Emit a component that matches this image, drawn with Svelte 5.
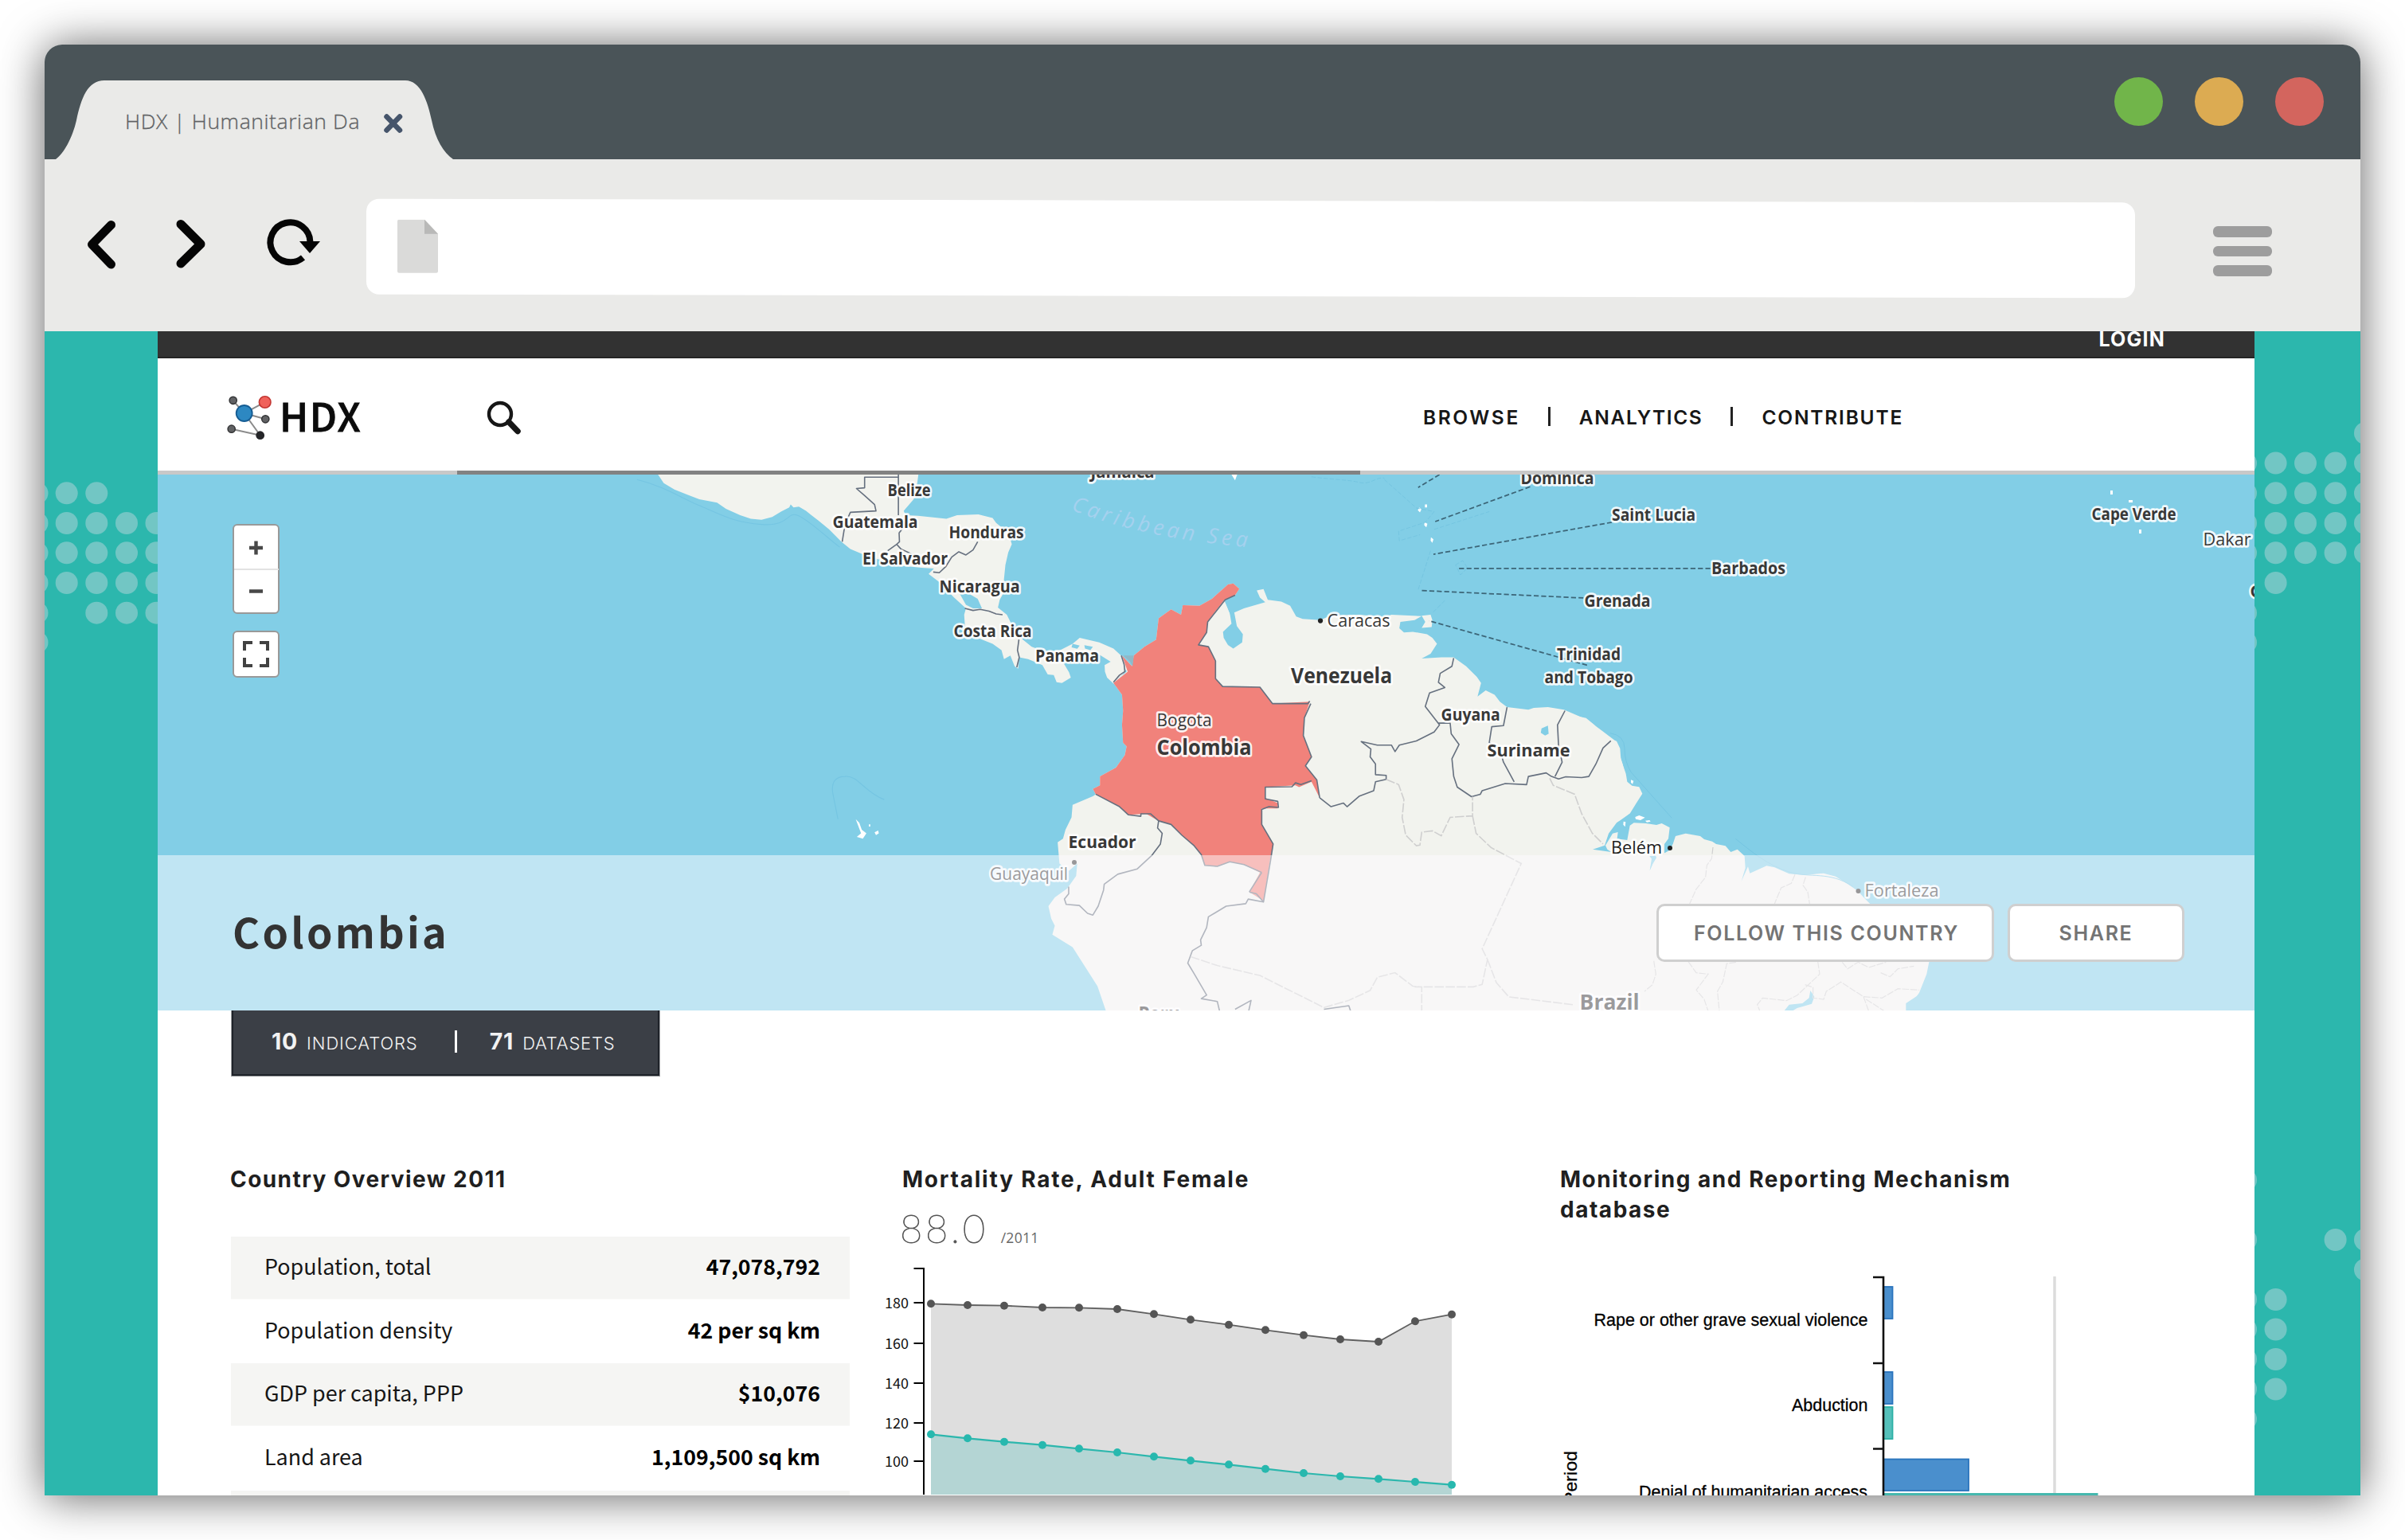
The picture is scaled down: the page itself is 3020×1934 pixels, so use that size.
<script>
  const leftDots = [
    [46.5, 619.3], [83.7, 619.3], [121.3, 619.3],
    [46.5, 657], [83.7, 657], [121.3, 657], [159, 657], [196.5, 657],
    [46.5, 694.3], [83.7, 694.3], [121.3, 694.3], [159, 694.3], [196.5, 694.3],
    [46.5, 732], [83.7, 732], [121.3, 732], [159, 732], [196.5, 732],
    [46.5, 769.7], [121.3, 769.7], [159, 769.7], [196.5, 769.7],
    [46.5, 806.7]
  ];
  const rightDots = [
    [2970, 544],
    [2820, 581.6], [2857.6, 581.6], [2895, 581.6], [2932.6, 581.6], [2970, 581.6],
    [2820, 619.3], [2857.6, 619.3], [2895, 619.3], [2932.6, 619.3], [2970, 619.3],
    [2820, 657], [2857.6, 657], [2895, 657], [2932.6, 657], [2970, 657],
    [2820, 694.3], [2857.6, 694.3], [2895, 694.3], [2932.6, 694.3], [2970, 694.3],
    [2857.6, 732], [2820, 769.7], [2820, 806.7],
    [2820, 1482], [2820, 1557], [2932.6, 1557], [2970, 1557], [2970, 1594.5],
    [2820, 1632], [2857.6, 1632], [2820, 1669.5], [2857.6, 1669.5],
    [2820, 1707], [2857.6, 1707], [2820, 1744.5], [2857.6, 1744.5], [2820, 1782]
  ];
  const dots = [...leftDots, ...rightDots];

  // [text, x, baseline, width, style]
  const labels = [
    ['Belize', 1115, 623, 54, 'country'],
    ['Guatemala', 1046, 663, 107, 'country'],
    ['Honduras', 1192, 676, 94, 'country'],
    ['El Salvador', 1083.5, 708.5, 107, 'country'],
    ['Nicaragua', 1180, 743.5, 101, 'country'],
    ['Costa Rica', 1198, 799.5, 98, 'country'],
    ['Panama', 1300.5, 830.5, 80, 'country'],
    ['Ecuador', 1342, 1065, 85, 'country mid'],
    ['Jamaica', 1370, 600, 80, 'country'],
    ['Guayaquil', 1243.5, 1105, 98, 'city'],
    ['Caracas', 1667, 787, 79, 'city'],
    ['Bogota', 1453, 912, 69, 'city'],
    ['Colombia', 1453, 947.5, 119, 'country big'],
    ['Venezuela', 1621.5, 858, 127, 'country big'],
    ['Guyana', 1810, 904.5, 74, 'country'],
    ['Suriname', 1868, 950, 104, 'country mid'],
    ['Dominica', 1910, 608, 92, 'country'],
    ['Trinidad', 1955.5, 829, 80, 'country'],
    ['and Tobago', 1940, 857.5, 111, 'country'],
    ['Saint Lucia', 2024.5, 654, 105, 'country'],
    ['Barbados', 2149.5, 721, 93, 'country'],
    ['Grenada', 1990, 762, 83, 'country'],
    ['Cape Verde', 2627, 653, 106, 'country'],
    ['Dakar', 2767, 685, 60, 'city'],
    ['G', 2826, 750, 15, 'country'],
    ['Belém', 2023.5, 1072, 64, 'city dark'],
    ['Fortaleza', 2342, 1126, 93, 'city'],
    ['Brazil', 1984, 1267.5, 75, 'country big'],
    ['Peru', 1430, 1283, 52, 'country big']
  ];

  const facts = [
    ['Population, total', '47,078,792'],
    ['Population density', '42 per sq km'],
    ['GDP per capita, PPP', '$10,076'],
    ['Land area', '1,109,500 sq km'],
    ['', '']
  ];

  const xs = [1169, 1215, 1261, 1309, 1355, 1403, 1449, 1495, 1543, 1589, 1637, 1683, 1731, 1777, 1823];
  const grey = [1638.3, 1640, 1640.7, 1643, 1643.3, 1645, 1651.3, 1658.3, 1664.7, 1671.3, 1677.7, 1683, 1686, 1660.3, 1651.7];
  const teal = [1802.3, 1807.3, 1811.7, 1815.7, 1820.3, 1825, 1830.3, 1835.3, 1840.3, 1845.7, 1851, 1855, 1858.3, 1862, 1865.7];
  const line = (ys) => xs.map((x, i) => `${x},${ys[i]}`).join(' ');
  const area = (ys) => `${xs[0]},1890 ${line(ys)} ${xs[xs.length - 1]},1890`;
  const yTicks = [[180, 1637], [160, 1688], [140, 1738], [120, 1788], [100, 1836]];
</script>

<div class="window">
  <div class="titlebar">
    <div class="tab">
      <svg class="tabshape" width="513" height="99" viewBox="0 0 513 99">
        <path d="M10,99C20,92 31,72 36,50C42,22 50,0 71,0L449,0C468,0 477,26 482,50C487,74 497,91 509,99Z" fill="#eaeae8" />
      </svg>
      <span class="tabtitle">HDX | Humanitarian Da</span>
      <svg class="tabclose" width="26" height="26" viewBox="0 0 26 26">
        <path d="M4.500 4.500L21 21.500M21 4.500L4.500 21.500" stroke="#46556b" stroke-width="6.500" stroke-linecap="round" />
      </svg>
    </div>
    <div class="lights"><i class="green"></i><i class="amber"></i><i class="red"></i></div>
  </div>

  <div class="toolbar">
    <svg class="navicons" width="350" height="80" viewBox="100 266 350 80">
      <g fill="none" stroke="#050505" stroke-linecap="round" stroke-linejoin="round" stroke-width="11">
        <path d="M139.500 282.500L115.500 307L139.500 332" />
        <path d="M227 281.500L252 306.500L227 331" />
      </g>
      <path d="M380.500,323.500 A25,25 0 1 1 389.500,304" fill="none" stroke="#050505" stroke-width="8" />
      <path d="M376 303H402L389 318Z" fill="#050505" />
    </svg>
    <div class="address">
      <svg width="52" height="68" viewBox="0 0 52 68">
        <path d="M2,0H34L51,18V65Q51,67 49,67H2Q0,67 0,65V2Q0,0 2,0Z" fill="#dadad9" />
        <path d="M34 0L51 18H34Z" fill="#b9b9b8" />
      </svg>
    </div>
    <div class="menu"><i></i><i></i><i></i></div>
  </div>

  <div class="viewport">
    <svg class="dots" width="2908" height="1462" viewBox="56 416 2908 1462">
      {#each dots as [x, y]}
        <circle cx={x} cy={y} r="14" fill="#72c6c4" />
      {/each}
    </svg>

    <main class="page">
      <div class="topstrip"><span>LOGIN</span></div>

      <header>
        <div class="logo">
          <svg width="58" height="58" viewBox="285 496 58 58">
            <g stroke="#8b8b8b" stroke-width="2">
              <path d="M292.700 503L306.700 519L332.700 505M306.700 519L333.300 526.300M306.700 519L326.700 546.700L290.700 538.700" fill="none" />
            </g>
            <g fill="#616264" stroke="#333436" stroke-width="1.500">
              <circle cx="292.700" cy="502.800" r="4.600" />
              <circle cx="333.300" cy="526.300" r="4.600" />
              <circle cx="290.700" cy="538.700" r="4.600" />
            </g>
            <circle cx="326.700" cy="546.700" r="5.400" fill="#242528" />
            <circle cx="332.700" cy="505" r="7.300" fill="#f0625b" stroke="#c33632" stroke-width="1.600" />
            <circle cx="306.700" cy="519" r="10" fill="#2d88c2" stroke="#155c93" stroke-width="1.800" />
          </svg>
          <span>HDX</span>
        </div>
        <svg class="search" width="46" height="46" viewBox="610 502 46 46">
          <circle cx="628" cy="520" r="14" fill="none" stroke="#171717" stroke-width="4.400" />
          <path d="M639 530L650 541.500" stroke="#171717" stroke-width="7.500" stroke-linecap="round" />
        </svg>
        <nav>
          <span class="n1">BROWSE</span><b></b><span class="n2">ANALYTICS</span><b></b><span class="n3">CONTRIBUTE</span>
        </nav>
      </header>
      <div class="progress"><i></i></div>

      <section class="map">
        <svg width="2633" height="673" viewBox="198 596 2633 673">
          <rect x="198" y="596" width="2633" height="673" fill="#82cee6" />

          <!-- Central America -->
          <g transform="translate(800 580) scale(.44643)">
            <path fill="#f2f3ee" d="M55,30L75,60 105,78 140,92 175,105 225,115 250,132 290,150 320,160 350,163 380,155 405,140 428,128 432,120 440,128 455,126 475,138 510,165 540,190 575,225 600,245 640,262 690,278 740,292 800,298 835,300 820,315 855,342 890,380 925,412 920,430 922,460 945,490 1000,512 1025,530 1032,555 1050,545 1062,575 1072,582 1075,550 1100,555 1140,572 1155,598 1172,600 1180,620 1195,622 1220,607 1215,592 1203,572 1195,560 1250,535 1300,542 1332,562 1315,572 1316,590 1322,607 1340,624 1365,600 1377,580 1365,548 1340,525 1300,508 1245,495 1225,512 1190,530 1150,535 1110,520 1085,500 1060,470 1040,430 1015,410 1020,388 1030,370 1032,330 1036,290 1044,255 1054,232 1045,200 1010,172 1000,158 960,148 900,150 870,160 790,152 755,150 750,138 778,105 788,60 792,30Z" />
            <path fill="#82cee6" d="M908,372L935,372 958,385 970,412 945,412 925,402ZM1225,512L1245,517 1238,526 1222,522ZM1258,516L1282,520 1275,530 1260,525Z" />
            <g class="border">
              <path d="M735,36V150M735,43L640,43 640,73 617,75 640,95 668,120 672,138 600,142 585,175 577,225" />
              <path d="M745,165L745,190 737,200 738,225 730,232 705,250M730,232L742,245 770,258 810,270 838,285" />
              <path d="M958,225L945,248 925,262 905,253 885,268 868,295 850,312 833,310" />
              <path d="M922,412L945,418 965,415 990,420 1010,428 1028,430" />
              <path d="M1074,500L1070,530 1075,550 1068,578" />
            </g>
            <path fill="#fff" d="M615,1005L625,1015 632,1035 645,1045 635,1060 618,1055 630,1045ZM668,1042l10-5 2,8-8,5ZM652,1020h4v6h-4Z" />
            <path fill="none" stroke="#75c5e2" stroke-width="2.500" d="M565,1005L550,930Q545,885 585,885C620,880 640,930 695,950M0,50C80,70 120,100 180,125S270,170 350,176S420,140 450,150S530,210 570,240" />
          </g>

          <!-- South America -->
          <g transform="translate(1350 580) scale(.44643)">
            <path fill="#f2f3ee" d="M108,622L145,590 132,545 160,575 165,545 195,520 228,500 235,440 270,415 298,430 303,403 350,405 385,385 430,345 445,342 462,357 450,375 420,390 437,430 445,425 475,412 535,395 520,382 511,362 530,358 542,388 580,393 605,405 622,435 640,442 690,445 720,432 800,430 870,437 890,430 975,434 955,445 915,450 912,468 925,480 950,478 990,485 1005,495 1018,512 1000,540 975,553 1030,550 1065,550 1100,575 1130,605 1142,622 1132,660 1155,643 1180,655 1195,675 1215,690 1275,697 1290,692 1330,690 1375,697 1440,725 1480,755 1520,785 1540,850 1552,900 1500,1000V1560H92L63,1475 28,1420 -7,1365 -64,1330 -57,1305 -67,1285 -75,1250 -57,1225 -22,1200 3,1165 6,1130 -17,1150 -44,1130 -49,1070 -34,1060 -27,1035 -10,1000 -7,965 51,940 58,935 50,920 70,910 70,885 115,860 140,825 145,800 135,790 132,740 135,700 132,655Z" />
            <path fill="#82cee6" d="M420,388L435,425 440,455 416,478 418,495 430,515 445,525 470,508 472,485 455,462 448,425 430,380Z" />
            <path fill="#f2f3ee" d="M975,433L1000,430 1005,445 1003,465 975,467 985,450Z" />
            <path fill="#fff" d="M968,128l6,6-4,8-6-6ZM984,120h6v8h-6ZM983,170l8,4-3,10-6-6ZM1001,212l7,6-3,10-5-6ZM440,36h16l-6,16Z" />
            <path fill="#f1827b" d="M108,622L148,590 132,545 160,575 165,545 195,520 228,500 235,440 270,415 298,430 303,403 350,405 385,385 430,345 445,342 462,357 450,375 420,388 395,420 373,450 370,480 347,515 375,520 395,560 395,610 415,632 520,634 555,680 660,675 645,720 642,770 665,830 648,855 680,895 688,945 665,900 630,915 620,910 535,915 535,945 570,960 570,975 525,975 525,1020 557,1075 550,1110 530,1235 490,1210 520,1155 475,1133 435,1125 400,1138 365,1135 355,1105 335,1080 300,1050 270,1020 235,1010 200,990 150,993 125,970 58,935 50,920 70,910 70,885 115,860 140,825 145,800 135,790 132,740 135,700 132,655Z" />
            <path fill="#8fb9c8" d="M135,545H165L162,575 155,562Z" />
          </g>

          <!-- Brazilian coast -->
          <g transform="translate(1980 840) scale(.33333)">
            <path fill="#f2f3ee" d="M-80,165L0,178 35,185 65,210 98,245 115,262 150,272 163,300 166,340 185,395 190,425 208,440 235,445 247,470 225,505 200,545 155,580 125,620 108,655 70,680 130,688 185,700 290,690 275,760 300,700 345,680 362,660 372,630 410,620 465,630 480,642 510,650 525,660 560,667 580,690 605,680 632,705 635,750 620,800 645,745 652,770 715,742 745,748 800,772 860,777 930,770 975,782 1020,810 1060,838 1080,860 1110,890 1200,960 1300,1030 1335,1070 1326,1110 1318,1150 1290,1220 1240,1290H-200Z" />
            <path fill="#82cee6" d="M200,545L215,560 200,590 190,640 330,660 370,625 355,680 320,700 290,700 285,720 270,700 130,690 60,680 105,665 120,620 150,580Z" />
            <path fill="#f2f3ee" d="M200,590L215,580 260,582 300,588 320,582 350,598 345,640 330,660 330,705 190,705 130,690 115,680 125,655 152,640 190,645ZM135,620L155,615 152,640 125,655 115,680 108,665Z" />
            <path fill="#fff" d="M220,558L235,552 257,560 240,570 222,566ZM258,572l16-2 4,5-14,3ZM176,575l8,2-2,18-7-8ZM204,418l10,4-4,12-6-6Z" />
            <path fill="#82cee6" d="M275,760L282,715 296,700 300,712 286,735ZM780,1290L800,1265 850,1260 875,1240 880,1212 895,1235 885,1262 830,1278 810,1290ZM1240,1290V1260L1300,1220V1290Z" />
            <g class="region">
              <path d="M513,672L508,715 490,740 485,785 450,830 425,885M822,775L808,808 770,825 745,885M862,785L852,815 870,840 877,885M290,1100L298,1150 285,1190 255,1215M420,1103L450,1145 495,1150 450,1210 480,1245 495,1290M600,1105L565,1110 550,1180 530,1215 537,1290M908,1103L915,1150 830,1230 790,1250 700,1240 680,1265 690,1290M860,1190L890,1200 890,1240 930,1245 940,1215 995,1180 1080,1235 1150,1240 1210,1205 1290,1210M1000,1105L1020,1130 1060,1105 1100,1125 1165,1105M1145,1145L1180,1160 1210,1130 1270,1120M1080,1235L1100,1290M1090,1245L1160,1290" />
            </g>
            <path fill="none" stroke="#74c5e1" stroke-width="3" d="M125,242Q180,250 180,300T205,390L358,562M598,640C660,690 720,740 800,765S950,760 1040,820" />
          </g>

          <!-- Borders, leader lines and the sea name -->
          <g transform="translate(1350 580) scale(.44643)">
            <path fill="#82cee6" d="M1312,750L1330,742 1332,765 1322,770 1310,762Z" />
            <g class="border">
              <path d="M108,620L125,600 140,590 138,570 130,545" />
              <path d="M450,375L422,388 397,420 373,450 370,480 347,515 375,520 395,560 395,610 415,632 520,634 555,680 655,680 660,673M663,680L645,720 642,770 665,830 648,855 680,895 688,945M665,897L635,908 620,903 610,914 535,915 535,948 570,955 572,972 545,970 525,978 525,1020 557,1075 550,1120 530,1238 510,1215 490,1210M525,1155L475,1133 435,1125 400,1138 365,1135 355,1105 335,1080 300,1050 270,1020 235,1010 212,990 185,990 185,997 150,993 125,970 58,935M525,1155L490,1210" />
              <path d="M235,1010L232,1030 245,1045 240,1075 215,1108 175,1145 120,1160 82,1188 80,1205 65,1250 50,1275 35,1270 12,1248 -25,1245 -30,1230 -18,1215 -18,1195" />
              <path d="M530,1238L487,1230 480,1243 425,1250 375,1280 370,1310 353,1345 355,1360 330,1375 317,1410 335,1440 370,1500 355,1510 400,1518 410,1560M450,1540L495,1515 485,1560M700,1540L770,1530 775,1545" />
              <path d="M688,945L720,970 755,960 765,970 800,940 840,925 845,900 875,893 875,882 845,880 845,850 830,830 832,808 805,787 850,797 890,797 900,815 912,797 960,785 1010,760 1025,740 985,688 997,650 1040,635 1022,620 1027,595 1060,575 1065,552" />
              <path d="M1022,735L1055,735 1058,765 1080,795 1060,835 1065,885 1075,915 1115,942 1140,935 1145,925 1210,905 1270,908 1275,885 1325,875 1340,885 1360,892 1380,886 1425,888 1445,885 1465,850 1485,805 1507,785" />
              <path d="M1215,690L1205,742 1172,745 1165,790 1195,810 1205,845 1235,900M1378,700L1357,740 1360,800 1370,845 1350,885" />
            </g>
            <g class="region">
              <path d="M875,893L910,908 925,950 920,1000 930,1050 960,1080 970,1078 975,1042 1005,1038 1030,1052 1055,1000 1118,996 1118,942M1118,996L1128,1045 1170,1085 1255,1130 1145,1370 1160,1400 1145,1470 1120,1477 955,1477M1160,1400L1185,1465 1220,1505 1400,1527M325,1392L400,1417 520,1445 700,1535 770,1515 830,1487 850,1450 900,1437 950,1475 975,1477 975,1560M1335,890L1345,910 1405,935 1425,990 1455,1045 1485,1075" />
            </g>
            <g fill="none" stroke="#3c6577" stroke-width="3.900" stroke-dasharray="14 7">
              <path d="M1025,36L965,72M1280,70L1013,168M1510,170L1008,260M1787,300H1080M1430,383L975,362M1440,572L995,447" />
            </g>
            <g fill="none" stroke="#73c4e0" stroke-width="2" stroke-dasharray="12 5">
              <path d="M870,50L960,130 1010,140 985,170 910,195 912,222 970,205M1010,190L1165,140M1000,250L965,360M1040,390L1005,425M665,42C720,50 770,50 800,58S850,40 870,46M1070,290l20-12 14,20-20,20Z" />
            </g>
            <path id="sea" fill="none" d="M-12,134Q200,222 560,246" />
            <text class="sea"><textPath href="#sea">Caribbean Sea</textPath></text>
            <circle cx="690" cy="447" r="7" fill="#222" />
          </g>

          <circle cx="1349" cy="1083" r="3" fill="#333" />
          <circle cx="2097" cy="1065" r="3" fill="#222" />
          <circle cx="2333.500" cy="1119" r="3" fill="#333" />
          <path fill="#fff" d="M2650,616h3v5h-3ZM2673,628h5v3h-5ZM2686,665h3v5h-3Z" />
          {#each labels as [text, x, y, w, kind]}
            <text class={kind} x={x - 0.4} {y} textLength={w} lengthAdjust="spacingAndGlyphs">{text}</text>
          {/each}
        </svg>

        <div class="controls">
          <div class="zoom">
            <svg width="56" height="110" viewBox="294 659 56 110">
              <path d="M313 687H330M321.500 678.500V695.500M313 741.500H330" stroke="#484848" stroke-width="4.400" />
              <path d="M294 714H350" stroke="#e2e2e2" stroke-width="2" />
            </svg>
          </div>
          <div class="full">
            <svg width="33" height="33" viewBox="0 0 33 33">
              <path d="M12 2H2V12M21 2H31V12M12 31H2V21M21 31H31V21" fill="none" stroke="#424242" stroke-width="4" />
            </svg>
          </div>
        </div>

        <div class="banner">
          <h1>Colombia</h1>
          <div class="actions">
            <button class="follow">FOLLOW THIS COUNTRY</button>
            <button class="share">SHARE</button>
          </div>
        </div>
      </section>

      <div class="stats">
        <strong>10</strong><span class="s1">INDICATORS</span><i></i><strong>71</strong><span class="s2">DATASETS</span>
      </div>

      <section class="columns">
        <article>
          <h2 class="h1w">Country Overview 2011</h2>
          <div class="facts">
            {#each facts as [name, value]}
              <div class="fact"><span>{name}</span><b>{value}</b></div>
            {/each}
          </div>
        </article>

        <article>
          <h2 class="h2w">Mortality Rate, Adult Female</h2>
          <div class="figure"><span>88.0</span><small>/2011</small></div>
          <svg class="linechart" width="740" height="298" viewBox="1100 1580 740 298">
            <polygon points={area(grey)} fill="#dedede" />
            <polygon points={area(teal)} fill="#b4d5d4" />
            <polyline points={line(grey)} fill="none" stroke="#606060" stroke-width="1.800" />
            <polyline points={line(teal)} fill="none" stroke="#2cb7ad" stroke-width="2.200" />
            {#each xs as x, i}
              <circle cx={x} cy={grey[i]} r="5" fill="#555" />
              <circle cx={x} cy={teal[i]} r="5" fill="#27b8ae" />
            {/each}
            <path d="M1147.500 1594H1160V1890" fill="none" stroke="#000" stroke-width="2" />
            {#each yTicks as [v, y]}
              <path d="M1147.500 {y}H1160" stroke="#000" stroke-width="2" />
              <text class="tick" x="1141" y={y + 7} text-anchor="end">{v}</text>
            {/each}
          </svg>
        </article>

        <article>
          <h2 class="h3w">Monitoring and Reporting Mechanism<br />database</h2>
          <svg class="barchart" width="740" height="288" viewBox="1959 1590 740 288">
            <path d="M2580 1603V1880" stroke="#dcdcdc" stroke-width="3.500" />
            <g fill="#4a8fcd" stroke="#2a74bd" stroke-width="1.800">
              <rect x="2365" y="1616" width="11.500" height="40" />
              <rect x="2365" y="1723" width="11.500" height="40" />
              <rect x="2365" y="1832.500" width="107" height="39.500" />
            </g>
            <rect x="2365" y="1767" width="11.500" height="40" fill="#55c0ba" stroke="#2cb0a5" stroke-width="1.800" />
            <rect x="2364" y="1875" width="270.500" height="10" fill="#45b8ae" />
            <path d="M2352 1604H2365V1890M2352 1712H2365M2352 1819.500H2365" fill="none" stroke="#111" stroke-width="2.600" />
            <g class="bartext">
              <text x="2001.500" y="1664.500" textLength="344" lengthAdjust="spacingAndGlyphs">Rape or other grave sexual violence</text>
              <text x="2250" y="1772" textLength="95.500" lengthAdjust="spacingAndGlyphs">Abduction</text>
              <text x="2058" y="1880.500" textLength="287" lengthAdjust="spacingAndGlyphs">Denial of humanitarian access</text>
              <text transform="translate(1980 1889) rotate(-90)" textLength="67" lengthAdjust="spacingAndGlyphs">Period</text>
            </g>
          </svg>
        </article>
      </section>
    </main>
  </div>
</div>

<style>
  :global(body) { background: #fff; overflow: hidden; }
  :global(#app) { display: flow-root; }
  .window {
    margin: 56px; width: 2908px; height: 1822px; display: flex; flex-direction: column;
    border-radius: 22px 22px 0 0; overflow: hidden;
    box-shadow: 0 2px 56px rgba(0, 0, 0, .62);
    font-family: Inter, 'Liberation Sans', sans-serif;
  }
  .titlebar { height: 144px; flex: none; background: #4a5458; display: flex; justify-content: space-between; }
  .tab { margin: 45px 0 0 0; height: 99px; width: 540px; position: relative; display: flex; align-items: center; }
  .tabshape { position: absolute; left: 4px; top: 0; }
  .tabtitle { position: relative; margin: 2px 0 0 101px; width: 320px; white-space: nowrap; font: 300 26.5px/40px 'Open Sans', sans-serif; letter-spacing: .6px; color: #606264; -webkit-text-stroke: .3px #606264; }
  .tabclose { position: relative; margin: 8px 0 0 4px; }
  .lights { display: flex; gap: 40px; margin: 41px 46px 0 0; }
  .lights i { width: 61px; height: 61px; border-radius: 50%; }
  .green { background: #71b54a; }
  .amber { background: #dcab52; }
  .red { background: #d3655e; }

  .toolbar { height: 216px; flex: none; background: #eaeae8; display: flex; align-items: flex-start; }
  .navicons { margin: 66px 10px 0 44px; flex: none; }
  .address { width: 2221px; height: 120px; margin-top: 52px; flex: none; background: #fff; border-radius: 16px; transform: skewY(.12deg); display: flex; align-items: center; padding-left: 39px; box-sizing: border-box; }
  .address svg { transform: skewY(-.12deg); }
  .menu { margin: 84px 0 0 98px; display: flex; flex-direction: column; gap: 11px; }
  .menu i { width: 74px; height: 13.500px; border-radius: 6px; background: #9d9d9d; }

  .viewport { flex: none; height: 1462px; background: #2cb7ad; position: relative; }
  .dots { position: absolute; left: 0; top: 0; }
  .page { position: relative; width: 2633px; height: 1462px; margin-left: 142px; background: #fff; overflow: hidden; }
  .topstrip { height: 32px; background: #323232; border-bottom: 2px solid #242424; display: flex; justify-content: flex-end; color: #fff; }
  .topstrip span { font-size: 25px; font-weight: 700; line-height: 20px; height: 20px; letter-spacing: 1.200px; margin-right: 112px; }
  header { height: 141px; display: flex; align-items: flex-start; position: relative; }
  .logo { display: flex; margin: 46px 0 0 87px; width: 272px; }
  .logo span { font: 500 49px/58px 'Noto Sans CJK SC', sans-serif; color: #0c0c0c; margin: -4px 0 0 8px; -webkit-text-stroke: .8px #0c0c0c; letter-spacing: 1.500px; }
  .search { margin: 52px 0 0 53px; }
  nav { display: flex; align-items: center; margin: 57px 0 0 1131px; height: 32px; font-size: 24.500px; line-height: 32px; font-weight: 600; color: #171717; }
  nav span { white-space: nowrap; margin-top: 1px; }
  .n1 { letter-spacing: 2.600px; }
  .n2 { letter-spacing: 1.600px; }
  .n3 { letter-spacing: 1.800px; }
  nav b { width: 3px; height: 24px; background: #222; margin: 0 36px 0 35px; }
  .progress { height: 5px; background: #c8c8c8; padding-left: 376px; }
  .progress i { display: block; width: 1134px; height: 5px; background: #828282; }

  .map { position: relative; height: 673px; overflow: hidden; }
  .map > svg { display: block; }
  .border path { fill: none; stroke: #66707f; stroke-width: 3.600; stroke-linejoin: round; }
  .region path { fill: none; stroke: #cfcfcf; stroke-width: 3.600; stroke-dasharray: 26 5; }
  .country, .city { font-family: 'Open Sans', 'Noto Sans', sans-serif; paint-order: stroke; stroke: rgba(255, 255, 255, .88); stroke-width: 5.500px; stroke-linejoin: round; fill: #383838; }
  .country { font-weight: 700; font-size: 21px; }
  .mid { font-size: 22px; }
  .big { font-size: 26px; }
  .city { font-size: 22.500px; font-weight: 400; }
  .dark { fill: #1d1d1d; }
  .sea { font: italic 400 60px 'Open Sans', sans-serif; fill: #a5d1ee; letter-spacing: 10.300px; }

  .controls { position: absolute; left: 94px; top: 62px; display: flex; flex-direction: column; gap: 21px; }
  .zoom, .full { box-sizing: border-box; width: 59px; border: 2px solid #999; border-radius: 6px; background: #fff; }
  .zoom { height: 113px; }
  .zoom svg { display: block; }
  .full { height: 59px; padding: 11px; }
  .full svg { display: block; }
  .banner { position: absolute; left: 0; right: 0; bottom: 0; height: 195px; background: rgba(253, 252, 255, .5); display: flex; justify-content: space-between; }
  h1 { margin: 55px 0 0 94px; font: 700 52px/80px 'Noto Sans CJK SC', sans-serif; letter-spacing: 3.300px; color: #333; }
  .actions { display: flex; gap: 17px; margin: 61px 88px 0 0; }
  button { box-sizing: border-box; height: 73px; border: 3px solid #cfcfcf; border-radius: 10px; background: #fff; font: 600 25px/60px Inter, sans-serif; letter-spacing: 1.650px; color: #747474; padding: 1px 0 0; }
  .follow { width: 424px; padding-left: 3px; }
  .share { width: 222px; }

  .stats { box-sizing: border-box; margin-left: 93px; width: 537px; height: 82px; background: #3b3f46; border: 2px solid #1e2229; border-top: 0; outline: 1px solid #9b9da0; display: flex; align-items: baseline; color: #f2f2f2; padding: 21px 0 0 48px; line-height: 36px; clip-path: inset(0 -2px -2px -2px); }
  .stats strong { font-size: 28.500px; letter-spacing: .8px; }
  .stats span { font-size: 22px; font-weight: 300; margin-left: 11px; }
  .stats .s1 { letter-spacing: .9px; }
  .stats .s2 { letter-spacing: .8px; }
  .stats i { width: 3px; height: 28px; background: #fff; margin: 4px 41px 0 46px; align-self: flex-start; }

  .columns { display: grid; grid-template-columns: 843px 827px 1fr; padding: 111px 0 0 91px; }
  h2 { margin: 0; font-size: 28px; line-height: 38px; font-weight: 700; color: #1f1f1f; white-space: nowrap; }
  .h1w { letter-spacing: 1.430px; }
  .h2w { letter-spacing: 1.780px; margin-left: 1px; }
  .h3w { letter-spacing: 1.520px; }
  .facts { width: 777px; margin: 53px 0 0 1px; }
  .fact { box-sizing: border-box; height: 79.700px; display: flex; justify-content: space-between; padding: 0 37px 0 42px; font: 400 26.900px/73px 'Noto Sans CJK SC', sans-serif; color: #161616; background: linear-gradient(#f5f5f3, #f5f5f3) no-repeat 0 0 / 100% 78.500px; }
  .fact:nth-child(even) { background: #fff; }
  .fact b { font-weight: 700; color: #000; font-size: 26.700px; }
  .figure { display: flex; align-items: baseline; gap: 16px; height: 60px; margin: 12px 0 0 -2px; color: #555; line-height: 60px; }
  .figure span { font: 100 49px/60px Lato, sans-serif; letter-spacing: 3.500px; -webkit-text-stroke: .9px #555; }
  .figure small { font: 400 17.500px/60px 'Open Sans', sans-serif; letter-spacing: .3px; color: #666; }
  .linechart { display: block; margin: 7px 0 0 -32px; }
  .tick { font: 400 18px 'Noto Sans CJK SC', sans-serif; fill: #111; }
  .barchart { display: block; margin-top: 52px; }
  .bartext text { font: 400 21.500px 'Liberation Sans', sans-serif; fill: #000; stroke: #000; stroke-width: .3px; }
</style>
